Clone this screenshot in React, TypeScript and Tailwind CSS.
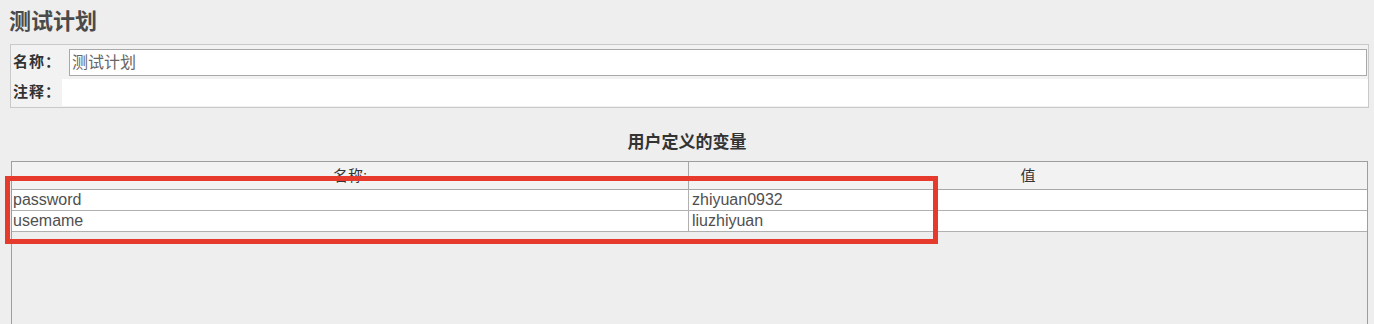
export default function App() {
  const rows = [
    { name: "password", value: "zhiyuan0932" },
    { name: "usemame", value: "liuzhiyuan" },
  ];

  return (
    <div className="relative w-[1374px] h-[324px] overflow-hidden bg-[#eeeeee] font-['Liberation_Sans','Noto_Sans_CJK_SC',sans-serif]">
      {/* Title */}
      <div className="h-[44px] pl-[9px] pt-[10px] text-[22px] leading-[24px] font-bold text-[#4a4a4a]">
        测试计划
      </div>

      {/* Name / comment panel */}
      <div className="ml-[10px] w-[1359px] h-[64px] border border-[#c9c9c9] bg-[#f2f2f2]">
        <div className="flex items-center h-[27px] mt-[4px]">
          <div className="w-[58px] pl-[2px] text-[15px] tracking-[1px] font-bold text-[#333]">名称：</div>
          <div className="flex-1 mr-[1px] h-[27px] flex items-center border border-[#a9a9a9] bg-white pl-[2px] text-[16px] text-[#666]">
            测试计划
          </div>
        </div>
        <div className="flex items-center h-[27px] mt-[3px]">
          <div className="w-[51px] pl-[2px] text-[15px] tracking-[1px] font-bold text-[#333]">注释：</div>
          <div className="flex-1 h-[27px] bg-white" />
        </div>
      </div>

      {/* Heading */}
      <div className="mt-[25px] h-[20px] text-center text-[17px] leading-[20px] font-bold text-[#333]">
        用户定义的变量
      </div>

      {/* Variables table */}
      <div className="mt-[8px] ml-[11px] w-[1357px] h-[200px] border-x border-t border-[#9e9e9e]">
        <div className="grid grid-cols-[677px_1fr] h-[28px] bg-[#f2f2f2] border-b border-[#a8a8a8] text-[15px] leading-[27px] text-[#333]">
          <div className="text-center border-r border-[#a8a8a8]">名称:</div>
          <div className="text-center">值</div>
        </div>
        {rows.map((r) => (
          <div
            key={r.name}
            className="grid grid-cols-[677px_1fr] h-[21px] bg-white border-b border-[#b0b0b0] text-[16px] leading-[20px] text-[#505050]"
          >
            <div className="pl-[1px] border-r border-[#b0b0b0]">{r.name}</div>
            <div className="pl-[3px]">{r.value}</div>
          </div>
        ))}
      </div>

      {/* Red annotation box */}
      <div className="absolute left-[5px] top-[176px] w-[933px] h-[68px] border-[5px] border-[#e53a2c]" />
    </div>
  );
}
